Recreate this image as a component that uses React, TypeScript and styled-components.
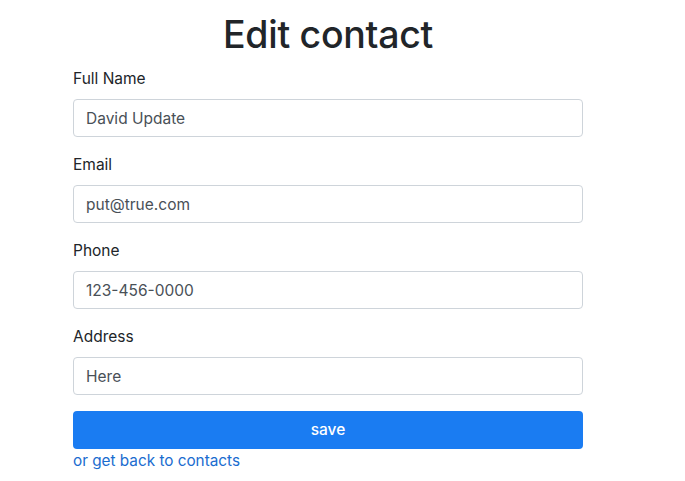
import React from "react";
import styled, { createGlobalStyle } from "styled-components";

const Global = createGlobalStyle`
  html, body { margin: 0; padding: 0; background: #fff; }
  body {
    font-family: Inter, "Helvetica Neue", "Liberation Sans", Arial, sans-serif;
    font-size: 16px;
    line-height: 1.5;
    color: #212529;
  }
  * { box-sizing: border-box; }
`;

const Page = styled.div`
  padding: 11px 0 0 73px;
`;

const Container = styled.div`
  width: 510px;
`;

const Title = styled.h1`
  margin: 0 0 8px;
  font-size: 37.5px;
  font-weight: 500;
  line-height: 48px;
  text-align: center;
  color: #212529;
  letter-spacing: -0.3px;
`;

const Form = styled.form`
  display: flex;
  flex-direction: column;
`;

const Group = styled.div`
  display: flex;
  flex-direction: column;
  margin-bottom: 16px;
`;

const Label = styled.label`
  display: block;
  line-height: 24px;
  margin-bottom: 8px;
  font-size: 15.5px;
`;

const Input = styled.input`
  display: block;
  width: 100%;
  height: 38px;
  padding: 6px 12px;
  font: inherit;
  font-size: 15.5px;
  color: #495057;
  background: #fff;
  border: 1px solid #ced4da;
  border-radius: 4px;
  outline: none;
`;

const SaveButton = styled.button`
  width: 100%;
  height: 38px;
  border: none;
  border-radius: 4px;
  background: #1a7cf2;
  color: #fff;
  font: inherit;
  font-size: 15.5px;
  font-weight: 500;
  cursor: pointer;
`;

const BackLink = styled.a`
  display: block;
  line-height: 24px;
  color: #1a6ccf;
  text-decoration: none;
  font-size: 15.3px;
`;

const fields = [
  { label: "Full Name", value: "David Update" },
  { label: "Email", value: "put@true.com" },
  { label: "Phone", value: "123-456-0000" },
  { label: "Address", value: "Here" },
];

export default function App() {
  return (
    <>
      <Global />
      <Page>
        <Container>
          <Title>Edit contact</Title>
          <Form onSubmit={(e) => e.preventDefault()}>
            {fields.map((f) => (
              <Group key={f.label}>
                <Label>{f.label}</Label>
                <Input defaultValue={f.value} />
              </Group>
            ))}
            <SaveButton type="submit">save</SaveButton>
            <BackLink href="#">or get back to contacts</BackLink>
          </Form>
        </Container>
      </Page>
    </>
  );
}
